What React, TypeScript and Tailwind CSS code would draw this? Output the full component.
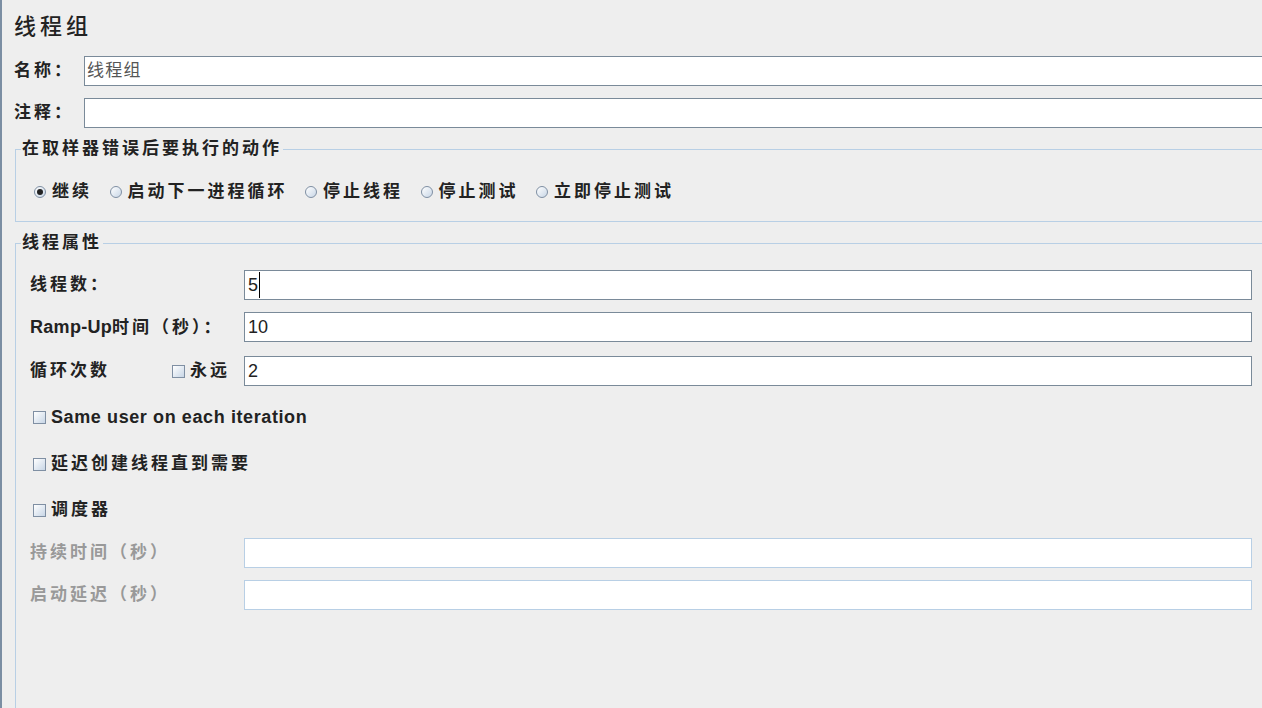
import React from 'react';

const FONT = {
  fontFamily: '"Liberation Sans", "Noto Sans CJK SC", sans-serif',
};

const Radio = ({ checked = false }: { checked?: boolean }) => (
  <span className="flex h-[12px] w-[12px] shrink-0 items-center justify-center rounded-full border border-[#7f8fa3] bg-gradient-to-br from-white to-[#c8d6e6]">
    {checked && <span className="h-[6px] w-[6px] rounded-full bg-[#222]" />}
  </span>
);

const CheckBox = () => (
  <span className="block h-[13px] w-[13px] shrink-0 border border-[#7f8fa3] bg-gradient-to-br from-white to-[#c8d6e6]" />
);

interface FieldProps {
  value?: string;
  disabled?: boolean;
  caret?: boolean;
}

const Field = ({ value = '', disabled = false, caret = false }: FieldProps) => (
  <div
    className={`flex h-[30px] w-[1008px] items-center bg-white pl-[3px] text-[18px] text-[#222] ${
      disabled ? 'border border-[#b8cfe5]' : 'border border-[#7a8a99]'
    }`}
  >
    <span>{value}</span>
    {caret && <span className="ml-px h-[26px] w-px bg-black" />}
  </div>
);

const actions = ['继续', '启动下一进程循环', '停止线程', '停止测试', '立即停止测试'];

const App = () => {
  return (
    <div
      className="h-[708px] w-[1262px] overflow-hidden border-l-2 border-[#7b8ea3] bg-[#eeeeee] pl-px text-[#222]"
      style={FONT}
    >
      <div className="pl-[11px] pt-[11px] text-[22px] font-medium leading-[32px] tracking-[4px]">
        线程组
      </div>

      <div className="mt-[13px] flex h-[30px] items-center pl-[11px]">
        <span className="w-[70px] text-[17px] font-bold tracking-[3px]">名称：</span>
        <div className="-mr-[20px] flex h-[30px] flex-1 items-center border border-[#7a8a99] bg-white pl-[2px] text-[17px] tracking-[1.3px] text-[#555]">
          线程组
        </div>
      </div>

      <div className="mt-[12px] flex h-[30px] items-center pl-[11px]">
        <span className="w-[70px] text-[17px] font-bold tracking-[3px]">注释：</span>
        <div className="-mr-[20px] h-[30px] flex-1 border border-[#7a8a99] bg-white" />
      </div>

      <fieldset className="-mr-[20px] ml-[12px] mt-[11px] border border-[#b8cfe5]">
        <legend className="ml-[5px] px-px text-[17px] font-bold leading-[20px] tracking-[3px]">
          在取样器错误后要执行的动作
        </legend>
        <div className="flex h-[20px] items-center gap-[17.5px] pb-[19px] pl-[18px] pt-[23px] box-content">
          {actions.map((a, i) => (
            <div key={a} className="flex items-center">
              <Radio checked={i === 0} />
              <span className="ml-[6px] text-[17px] font-bold leading-[20px] tracking-[3px]">
                {a}
              </span>
            </div>
          ))}
        </div>
      </fieldset>

      <fieldset className="-mr-[20px] ml-[12px] mt-[11px] h-[520px] border border-[#b8cfe5]">
        <legend className="ml-[5px] px-px text-[17px] font-bold leading-[20px] tracking-[3px]">
          线程属性
        </legend>

        <div className="pl-[14px]">
          <div className="mt-[17px] flex items-center">
            <span className="w-[214px] text-[17px] font-bold tracking-[3px]">线程数：</span>
            <Field value="5" caret />
          </div>

          <div className="mt-[12px] flex items-center">
            <span className="w-[214px] text-[17px] font-bold">
              <span className="text-[18px] tracking-[0.3px]">Ramp-Up</span>
              <span className="tracking-[3px]">时间（秒）：</span>
            </span>
            <Field value="10" />
          </div>

          <div className="mt-[14px] flex items-center">
            <div className="flex w-[214px] items-center text-[17px] font-bold tracking-[3px]">
              <span>循环次数</span>
              <span className="ml-[62px] flex">
                <CheckBox />
              </span>
              <span className="ml-[5px]">永远</span>
            </div>
            <Field value="2" />
          </div>

          <div className="mt-[21px] flex h-[20px] items-center pl-[3px]">
            <CheckBox />
            <span className="ml-[5px] text-[18px] font-bold tracking-[0.6px]">
              Same user on each iteration
            </span>
          </div>

          <div className="mt-[27px] flex h-[20px] items-center pl-[3px]">
            <CheckBox />
            <span className="ml-[5px] text-[17px] font-bold tracking-[3px]">延迟创建线程直到需要</span>
          </div>

          <div className="mt-[26px] flex h-[20px] items-center pl-[3px]">
            <CheckBox />
            <span className="ml-[5px] text-[17px] font-bold tracking-[3px]">调度器</span>
          </div>

          <div className="mt-[18px] flex items-center">
            <span className="w-[214px] text-[17px] font-bold tracking-[3px] text-[#999]">
              持续时间（秒）
            </span>
            <Field disabled />
          </div>

          <div className="mt-[12px] flex items-center">
            <span className="w-[214px] text-[17px] font-bold tracking-[3px] text-[#999]">
              启动延迟（秒）
            </span>
            <Field disabled />
          </div>
        </div>
      </fieldset>
    </div>
  );
};

export default App;
